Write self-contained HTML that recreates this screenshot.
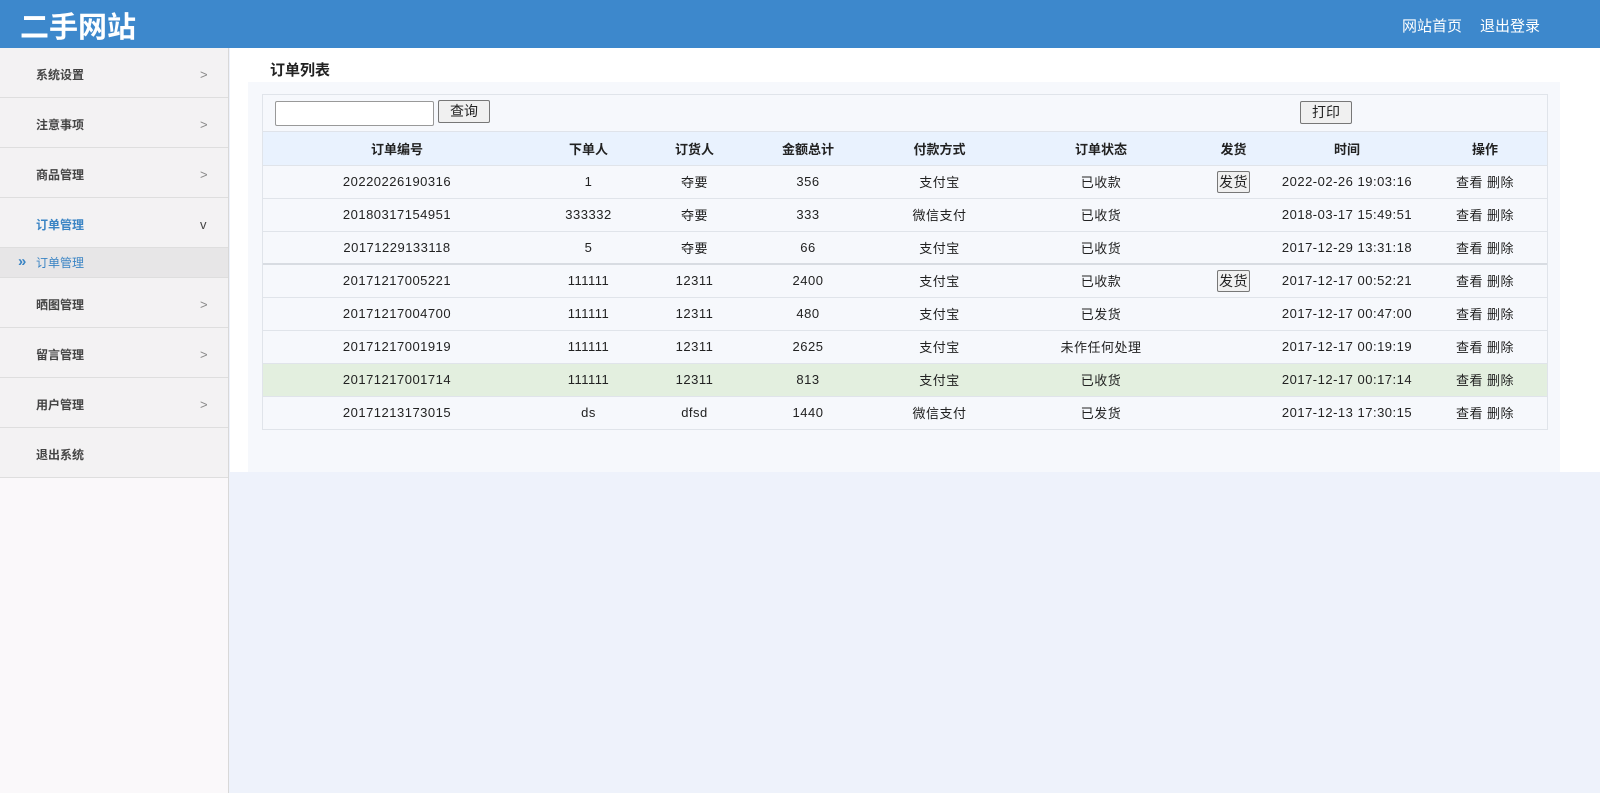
<!DOCTYPE html>
<html><head><meta charset="utf-8"><style>
*{margin:0;padding:0;box-sizing:border-box}
body{width:1600px;height:793px;overflow:hidden;background:#eef2fb;font-family:"Liberation Sans","Noto Sans CJK SC",sans-serif;font-size:13px;color:#222;position:relative}
.hd{position:absolute;left:0;top:0;width:1600px;height:48px;background:#3d88cc;color:#fff}
.logo{position:absolute;left:20px;top:4px;font-size:29px;font-weight:bold}
.hl{position:absolute;top:15px;font-size:15px}
.sb{position:absolute;left:0;top:48px;width:229px;height:745px;background:#faf8fa;border-right:1px solid #d8d8d8}
.it{height:50px;border-bottom:1px solid #dedede;background:#f3f2f3;position:relative;font-size:12px;font-weight:bold;line-height:54px;padding-left:36px;color:#444}
.it .ar{position:absolute;left:200px;top:0;color:#888;font-size:13px;font-weight:normal}
.it.on{color:#3a84c4}
.sub{height:30px;line-height:30px;background:#e7e6e7;padding-left:36px;color:#3a84c4;font-size:12px;position:relative;border-bottom:1px solid #dedede}
.sub b{position:absolute;left:18px;top:-1px;font-size:15px;color:#3a84c4}
.ct{position:absolute;left:230px;top:48px;width:1370px;height:416px;background:#fff}
.tt{position:absolute;left:40px;top:11px;font-size:15px;font-weight:bold}
.pn{position:absolute;left:18px;top:34px;width:1312px;height:382px;background:#f6f8fc}
.tb{position:absolute;width:1286px;border:1px solid #e0e4ea;background:#f6f8fc}
.bar{height:37px;position:relative;border-bottom:1px solid #dfe3ea}
.inp{position:absolute;left:12px;top:6px;width:159px;height:25px;border:1px solid #999;border-radius:2px;background:#fff}
.btn{position:absolute;border:1px solid #777;background:#f0f0f0;font-size:14px;text-align:center;border-radius:2px}
table{border-collapse:collapse;width:100%}
th{height:33px;background:#e9f2fe;font-weight:bold;font-size:13px}
td{height:33px;text-align:center;border-top:1px solid #e0e4ea;font-size:13px;letter-spacing:.5px;color:#222}
tr.g td{background:#e3efdf}
tr.d td{border-top:2px solid #d8dce2}
.fb{display:inline-block;border:1px solid #777;background:#f0f0f0;font-size:14px;padding:0 1px;line-height:20px;border-radius:2px}
</style></head><body>
<div class="hd"><div class="logo">二手网站</div><div class="hl" style="left:1402px">网站首页</div><div class="hl" style="left:1480px">退出登录</div></div>
<div class="sb">
<div class="it">系统设置<span class="ar">&gt;</span></div>
<div class="it">注意事项<span class="ar">&gt;</span></div>
<div class="it">商品管理<span class="ar">&gt;</span></div>
<div class="it on">订单管理<span class="ar" style="color:#444">v</span></div>
<div class="sub"><b>»</b>订单管理</div>
<div class="it">晒图管理<span class="ar">&gt;</span></div>
<div class="it">留言管理<span class="ar">&gt;</span></div>
<div class="it">用户管理<span class="ar">&gt;</span></div>
<div class="it">退出系统</div>
</div>
<div class="ct" style="height:424px"><div class="tt">订单列表</div><div class="pn" style="height:390px"></div></div>
<div class="tb" style="left:262px;top:94px">
<div class="bar"><div class="inp"></div><div class="btn" style="left:175px;top:5px;width:52px;height:23px;line-height:21px">查询</div><div class="btn" style="left:1037px;top:6px;width:52px;height:23px;line-height:21px">打印</div></div>
<table>
<colgroup><col style="width:268px"><col style="width:115px"><col style="width:97px"><col style="width:130px"><col style="width:133px"><col style="width:190px"><col style="width:75px"><col style="width:152px"><col></colgroup>
<tr><th>订单编号</th><th>下单人</th><th>订货人</th><th>金额总计</th><th>付款方式</th><th>订单状态</th><th>发货</th><th>时间</th><th>操作</th></tr>
<tr><td>20220226190316</td><td>1</td><td>夺要</td><td>356</td><td>支付宝</td><td>已收款</td><td><span class="fb">发货</span></td><td>2022-02-26 19:03:16</td><td>查看 删除</td></tr>
<tr><td>20180317154951</td><td>333332</td><td>夺要</td><td>333</td><td>微信支付</td><td>已收货</td><td></td><td>2018-03-17 15:49:51</td><td>查看 删除</td></tr>
<tr><td>20171229133118</td><td>5</td><td>夺要</td><td>66</td><td>支付宝</td><td>已收货</td><td></td><td>2017-12-29 13:31:18</td><td>查看 删除</td></tr>
<tr class="d"><td>20171217005221</td><td>111111</td><td>12311</td><td>2400</td><td>支付宝</td><td>已收款</td><td><span class="fb">发货</span></td><td>2017-12-17 00:52:21</td><td>查看 删除</td></tr>
<tr><td>20171217004700</td><td>111111</td><td>12311</td><td>480</td><td>支付宝</td><td>已发货</td><td></td><td>2017-12-17 00:47:00</td><td>查看 删除</td></tr>
<tr><td>20171217001919</td><td>111111</td><td>12311</td><td>2625</td><td>支付宝</td><td>未作任何处理</td><td></td><td>2017-12-17 00:19:19</td><td>查看 删除</td></tr>
<tr class="g"><td>20171217001714</td><td>111111</td><td>12311</td><td>813</td><td>支付宝</td><td>已收货</td><td></td><td>2017-12-17 00:17:14</td><td>查看 删除</td></tr>
<tr><td>20171213173015</td><td>ds</td><td>dfsd</td><td>1440</td><td>微信支付</td><td>已发货</td><td></td><td>2017-12-13 17:30:15</td><td>查看 删除</td></tr>
</table></div>
</body></html>
